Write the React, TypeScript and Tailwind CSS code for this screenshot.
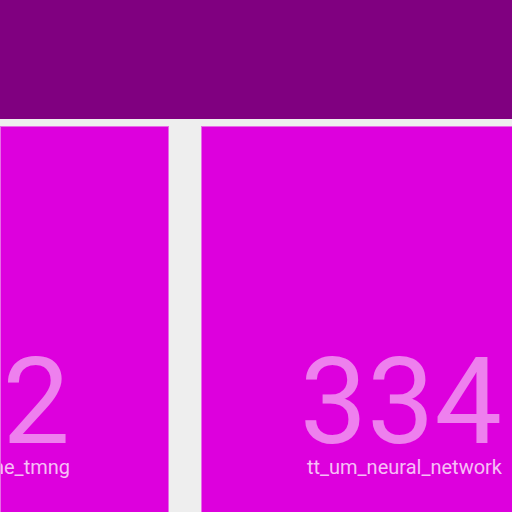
const tiles = [
  { value: "2", label: "tt_um_engine_tmng", width: "w-[169px]" },
  { value: "334", label: "tt_um_neural_network", width: "w-[400px]" },
]

export default function App() {
  return (
    <div
      className="h-[512px] w-[512px] overflow-hidden bg-[#eeeeee]"
      style={{ fontFamily: "Roboto, 'Noto Sans', sans-serif" }}
    >
      <div className="h-[119px] bg-[#800080]" />
      <div className="mt-[7px] flex gap-8">
        {tiles.map((t) => (
          <div
            key={t.value}
            className={`${t.width} h-[400px] shrink-0 overflow-hidden border border-[#e86ae8] bg-[#dd00dd]`}
          >
            <div className="flex flex-col items-end pr-[98px] pt-[221px]">
              <div className="whitespace-nowrap text-[120px] font-normal leading-[109px] text-white/50">
                {t.value}
              </div>
              <div className="whitespace-nowrap text-[20px] leading-none text-white/75">{t.label}</div>
            </div>
          </div>
        ))}
      </div>
    </div>
  )
}
